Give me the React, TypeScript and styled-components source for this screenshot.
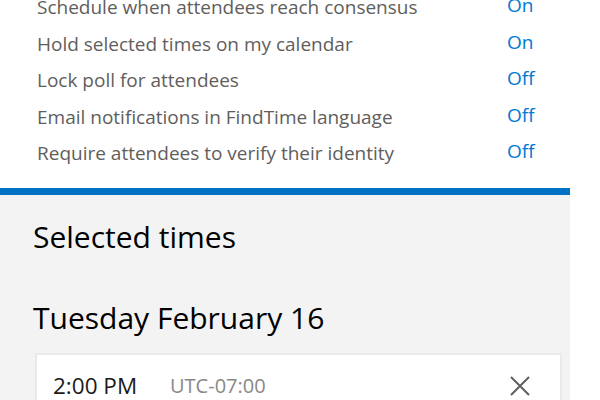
import React from "react";
import styled, { createGlobalStyle } from "styled-components";

const Global = createGlobalStyle`
  html, body { margin: 0; padding: 0; background: #ffffff; overflow: hidden; }
  body { font-family: "Open Sans", "Noto Sans", sans-serif; }
  * { box-sizing: border-box; }
`;

const Page = styled.div`
  width: 600px;
  height: 400px;
  overflow: hidden;
  display: flex;
  flex-direction: column;
`;

const SettingsList = styled.div`
  margin-top: -11px;
  padding: 0 0 16px 37px;
  display: flex;
  flex-direction: column;
`;

const Row = styled.div`
  display: flex;
  align-items: baseline;
  height: 36.5px;
  line-height: 36.5px;
`;

const Label = styled.span`
  width: 470px;
  font-size: 19px;
  color: #5f5e5c;
  white-space: nowrap;
`;

const Value = styled.span`
  font-size: 19px;
  color: #0078d4;
  position: relative;
  top: -2px;
`;

const Panel = styled.section`
  width: 570px;
  flex: 1;
  background: #f3f3f3;
  border-top: 7px solid #0072c6;
  padding: 24px 8px 0 33px;
  display: flex;
  flex-direction: column;
`;

const Heading = styled.h2`
  margin: 0;
  font-size: 30px;
  line-height: 36px;
  font-weight: 400;
  color: #000000;
`;

const DayHeading = styled(Heading)`
  margin-top: 45px;
`;

const Card = styled.div`
  margin: 17px 0 0 2px;
  background: #ffffff;
  border: 2px solid #eaeaea;
  padding: 17px 30px 20px 16px;
  display: flex;
  align-items: center;
`;

const Time = styled.span`
  font-size: 22.5px;
  line-height: 28px;
  color: #1b1a19;
  width: 117px;
`;

const Zone = styled.span`
  flex: 1;
  font-size: 20px;
  line-height: 24px;
  color: #8a8886;
`;

const CloseButton = styled.button`
  border: 0;
  background: none;
  padding: 0;
  width: 20px;
  height: 20px;
  display: flex;
  color: #605e5c;
`;

const settings: [string, string][] = [
  ["Schedule when attendees reach consensus", "On"],
  ["Hold selected times on my calendar", "On"],
  ["Lock poll for attendees", "Off"],
  ["Email notifications in FindTime language", "Off"],
  ["Require attendees to verify their identity", "Off"],
];

export default function App() {
  return (
    <Page>
      <Global />
      <SettingsList>
        {settings.map(([label, value]) => (
          <Row key={label}>
            <Label>{label}</Label>
            <Value>{value}</Value>
          </Row>
        ))}
      </SettingsList>
      <Panel>
        <Heading>Selected times</Heading>
        <DayHeading>Tuesday February 16</DayHeading>
        <Card>
          <Time>2:00 PM</Time>
          <Zone>UTC-07:00</Zone>
          <CloseButton aria-label="Remove">
            <svg width="20" height="20" viewBox="0 0 20 20">
              <path d="M1 1 L19 19 M19 1 L1 19" stroke="currentColor" strokeWidth="2" fill="none" />
            </svg>
          </CloseButton>
        </Card>
      </Panel>
    </Page>
  );
}
